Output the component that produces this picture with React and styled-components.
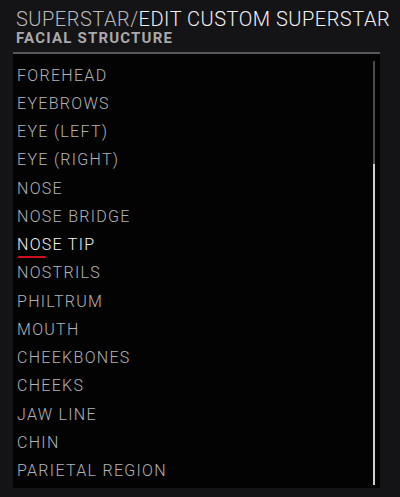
import React from "react";
import styled, { createGlobalStyle } from "styled-components";

const GlobalStyle = createGlobalStyle`
  html, body {
    margin: 0;
    padding: 0;
    background: #141316;
  }
  body {
    font-family: Roboto, "Liberation Sans", sans-serif;
  }
`;

const Page = styled.div`
  width: 400px;
  height: 497px;
  box-sizing: border-box;
  padding: 8px 8px 9px 13px;
  background: #141316;
  display: flex;
  flex-direction: column;
  overflow: hidden;
`;

const Header = styled.div`
  padding-left: 3px;
  display: flex;
  flex-direction: column;
`;

const Title = styled.div`
  font-size: 20px;
  font-weight: 300;
  line-height: 22px;
  letter-spacing: 0.5px;
  color: #b9b9bc;
  white-space: nowrap;
`;

const TitleStrong = styled.span`
  color: #f2f2f2;
`;

const Subtitle = styled.div`
  font-size: 15px;
  font-weight: 700;
  line-height: 17px;
  letter-spacing: 1.2px;
  color: #a9a9ac;
`;

const Panel = styled.div`
  margin-top: 5px;
  margin-right: 12px;
  flex: 1;
  background: #030303;
  border-top: 2px solid #58585a;
  display: flex;
  position: relative;
`;

const List = styled.ul`
  list-style: none;
  margin: 0;
  padding: 7px 0 0 4px;
  flex: 1;
`;

const Item = styled.li`
  height: 28.25px;
  display: flex;
  flex-direction: column;
  justify-content: center;
  font-size: 16px;
  font-weight: 300;
  letter-spacing: 1.3px;
  color: ${(p) => (p.$active ? "#f4f4f4" : "#b3b3b6")};
  position: relative;
`;

const Underline = styled.span`
  position: absolute;
  left: 1px;
  bottom: 1px;
  width: 28px;
  height: 2px;
  background: #d0101c;
`;

const Scroll = styled.div`
  width: 2px;
  margin: 7px 5px 3px 0;
  display: flex;
  flex-direction: column;
`;

const Track = styled.div`
  height: 103px;
  background: #4a4a4d;
`;

const Thumb = styled.div`
  flex: 1;
  background: #cfcfd2;
`;

const items = [
  "FOREHEAD",
  "EYEBROWS",
  "EYE (LEFT)",
  "EYE (RIGHT)",
  "NOSE",
  "NOSE BRIDGE",
  "NOSE TIP",
  "NOSTRILS",
  "PHILTRUM",
  "MOUTH",
  "CHEEKBONES",
  "CHEEKS",
  "JAW LINE",
  "CHIN",
  "PARIETAL REGION",
];

export default function App() {
  return (
    <Page>
      <GlobalStyle />
      <Header>
        <Title>
          SUPERSTAR/<TitleStrong>EDIT CUSTOM SUPERSTAR</TitleStrong>
        </Title>
        <Subtitle>FACIAL STRUCTURE</Subtitle>
      </Header>
      <Panel>
        <List>
          {items.map((name) => (
            <Item key={name} $active={name === "NOSE TIP"}>
              {name}
              {name === "NOSE TIP" && <Underline />}
            </Item>
          ))}
        </List>
        <Scroll>
          <Track />
          <Thumb />
        </Scroll>
      </Panel>
    </Page>
  );
}
